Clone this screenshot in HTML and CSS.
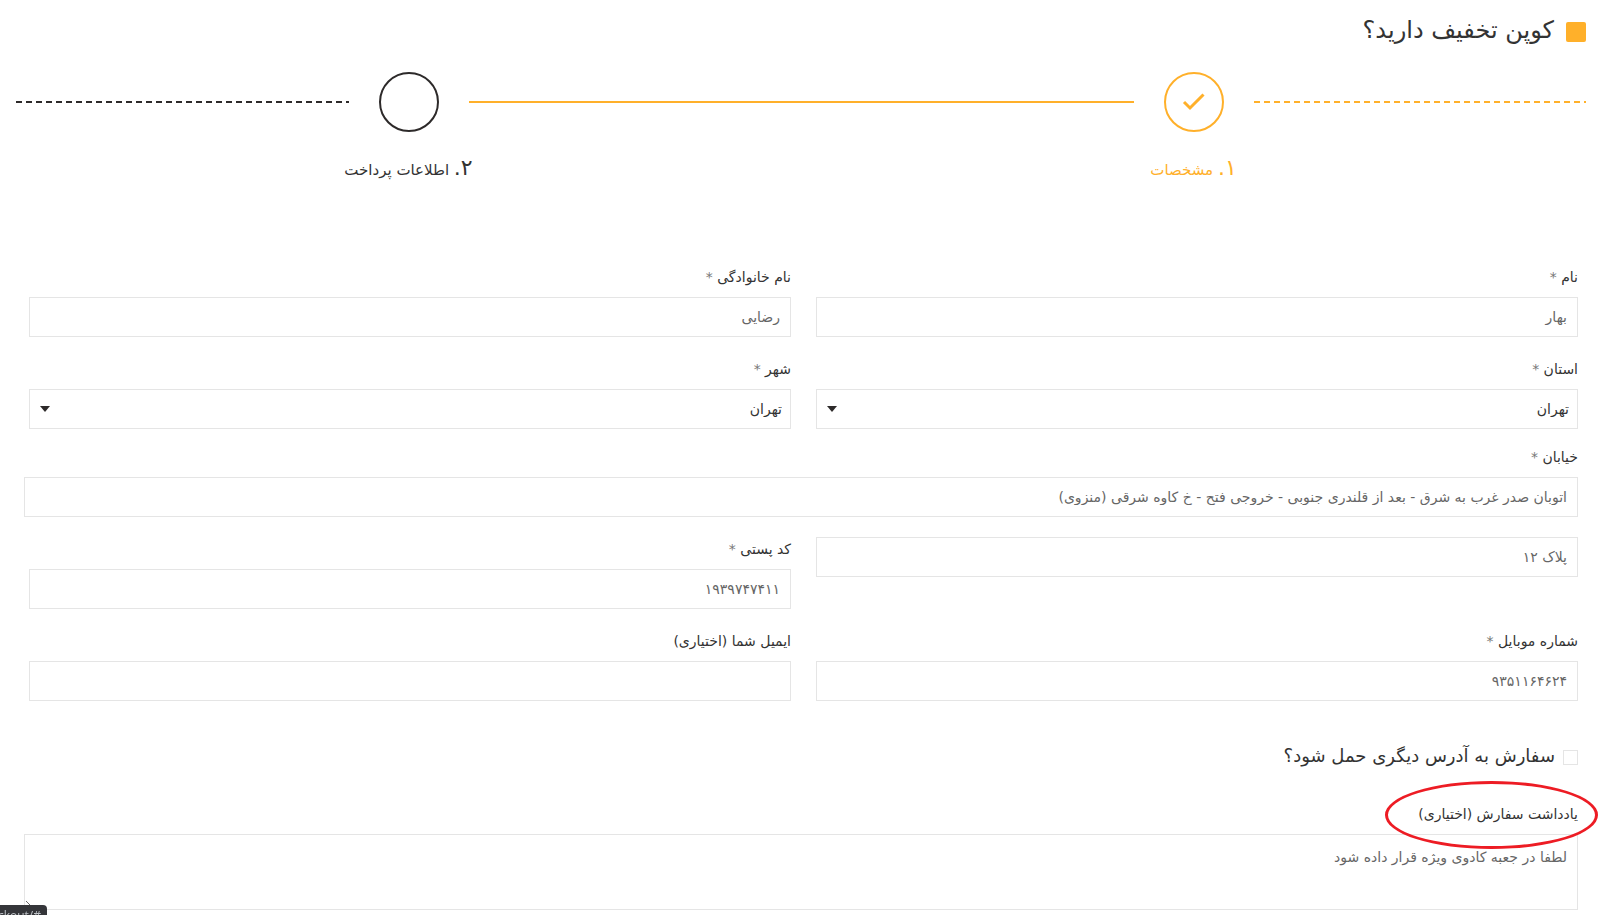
FILE: index.html
```html
<!DOCTYPE html>
<html lang="fa" dir="rtl">
<head>
  <meta charset="UTF-8">
  <meta name="viewport" content="width=device-width, initial-scale=1.0">
  <title>تسویه حساب</title>
  <link rel="stylesheet" href="styles.css">
</head>
<body>
  <main class="checkout">
    <h2 class="coupon"><span class="coupon-mark"></span><span class="coupon-text">کوپن تخفیف دارید؟</span></h2>

    <ol class="steps">
      <li class="step active">
        <div class="step-track">
          <span class="line dashed"></span>
          <span class="circle">
            <svg width="24" height="24" viewBox="0 0 24 24" fill="none" stroke="currentColor" stroke-width="3"><path d="M2 12l6 6L21.500 4.500"/></svg>
          </span>
          <span class="line"></span>
        </div>
        <p class="step-title"><span class="num">۱.</span> مشخصات</p>
      </li>
      <li class="step">
        <div class="step-track">
          <span class="line done"></span>
          <span class="circle"></span>
          <span class="line dashed"></span>
        </div>
        <p class="step-title"><span class="num">۲.</span> اطلاعات پرداخت</p>
      </li>
    </ol>

    <form class="billing">
      <div class="row">
        <div class="field">
          <label for="firstName">نام <span class="required">*</span></label>
          <input type="text" id="firstName" value="بهار">
        </div>
        <div class="field">
          <label for="lastName">نام خانوادگی <span class="required">*</span></label>
          <input type="text" id="lastName" value="رضایی">
        </div>
      </div>

      <div class="row row-tight">
        <div class="field">
          <label for="state">استان <span class="required">*</span></label>
          <div class="select-box">
            <select id="state"><option>تهران</option></select>
          </div>
        </div>
        <div class="field">
          <label for="city">شهر <span class="required">*</span></label>
          <div class="select-box">
            <select id="city"><option>تهران</option></select>
          </div>
        </div>
      </div>

      <div class="field field-wide">
        <label for="street">خیابان <span class="required">*</span></label>
        <input type="text" id="street" value="اتوبان صدر غرب به شرق - بعد از قلندری جنوبی - خروجی فتح - خ کاوه شرقی (منزوی)">
      </div>

      <div class="row">
        <div class="field">
          <input type="text" id="unit" aria-label="پلاک" value="پلاک ۱۲">
        </div>
        <div class="field">
          <label for="postcode">کد پستی <span class="required">*</span></label>
          <input type="text" id="postcode" value="۱۹۳۹۷۴۷۴۱۱">
        </div>
      </div>

      <div class="row">
        <div class="field">
          <label for="phone">شماره موبایل <span class="required">*</span></label>
          <input type="text" id="phone" value="۹۳۵۱۱۶۴۶۲۴">
        </div>
        <div class="field">
          <label for="email">ایمیل شما (اختیاری)</label>
          <input type="text" id="email">
        </div>
      </div>

      <div class="shipping">
        <input type="checkbox" id="otherAddress">
        <label for="otherAddress">سفارش به آدرس دیگری حمل شود؟</label>
      </div>

      <div class="field notes">
        <label for="notes">یادداشت سفارش (اختیاری)</label>
        <textarea id="notes">لطفا در جعبه کادوی ویژه قرار داده شود</textarea>
        <span class="highlight"></span>
      </div>
    </form>
  </main>

  <div class="link-status" dir="ltr">ckout/#</div>
</body>
</html>
```
FILE: styles.css
```css
* { margin: 0; padding: 0; box-sizing: border-box; }
body {
  font-family: 'DejaVu Sans', sans-serif;
  font-size: 14px;
  background: #fff;
  color: #333;
  overflow: hidden;
}
input, select, textarea {
  font-family: inherit;
  font-size: inherit;
}
.checkout {
  padding: 12px 28px 5px 16px;
}
.coupon {
  display: flex;
  align-items: center;
  gap: 12px;
  height: 40px;
  font-size: 24px;
  font-weight: normal;
}
.coupon-text {
  padding-bottom: 4px;
}
.coupon-mark {
  width: 20px;
  height: 20px;
  border-radius: 2px;
  background: #ffb02a;
}

/* steps */
.steps {
  display: flex;
  list-style: none;
  margin-top: 20px;
}
.step {
  flex: 1;
}
.step-track {
  display: flex;
  align-items: center;
  gap: 30px;
}
.line {
  flex: 1;
  border-top: 2px solid #2d2a2a;
}
.line.dashed {
  height: 2px;
  border: 0;
  background: repeating-linear-gradient(to right, #2d2a2a 0 6px, transparent 6px 10px);
}
.line.done,
.active .line {
  border-color: #ffb02a;
}
.active .line.dashed {
  background: repeating-linear-gradient(to right, #ffb02a 0 6px, transparent 6px 10px);
}
.circle {
  display: flex;
  align-items: center;
  justify-content: center;
  width: 60px;
  height: 60px;
  border: 2px solid #2d2a2a;
  border-radius: 50%;
}
.active .circle {
  border-color: #ffb02a;
  color: #ffb02a;
}
.step-title {
  margin-top: 20px;
  height: 32px;
  font-size: 15px;
  line-height: 32px;
  text-align: center;
}
.active .step-title {
  color: #ffb02a;
}
.num {
  font-size: 22px;
}

/* form */
.billing {
  margin-top: 81px;
  padding: 0 8px;
}
.row {
  display: grid;
  grid-template-columns: 1fr 1fr;
  gap: 25px;
  padding-left: 5px;
  margin-bottom: 20px;
}
.row-tight {
  margin-bottom: 16px;
}
.field-wide {
  margin-bottom: 20px;
}
.field label {
  display: block;
  height: 32px;
  line-height: 24px;
}
.required {
  color: #777;
}
.field input,
.field select,
.field textarea {
  display: block;
  width: 100%;
  height: 40px;
  padding: 0 10px;
  border: 1px solid #e5e5e5;
  border-radius: 0;
  background: #fff;
  color: #666;
  outline: none;
}
.select-box {
  position: relative;
}
.field select {
  appearance: none;
  padding: 0 8px;
  color: #333;
}
.select-box::after {
  content: '';
  position: absolute;
  left: 11px;
  top: 17px;
  border: 5px solid transparent;
  border-top: 6px solid #2d2a2a;
  border-bottom: 0;
}
.shipping {
  display: flex;
  align-items: center;
  gap: 8px;
  height: 32px;
  margin-top: 40px;
}
.shipping input {
  appearance: none;
  width: 15px;
  height: 15px;
  border: 1px solid #e5e5e5;
}
.shipping label {
  padding-bottom: 4px;
  font-size: 18px;
}
.notes {
  position: relative;
  margin-top: 29px;
}
.field textarea {
  height: 76px;
  padding: 10px;
  line-height: 24px;
}
.highlight {
  position: absolute;
  top: -21px;
  right: -20px;
  width: 213px;
  height: 68px;
  border: 3px solid #ed1c24;
  border-radius: 50%;
  pointer-events: none;
}
.link-status {
  position: fixed;
  left: 0;
  bottom: -12px;
  width: 47px;
  height: 22px;
  padding-right: 6px;
  border-radius: 0 4px 0 0;
  background: #35363a;
  color: #bdc1c6;
  font-family: 'Open Sans', sans-serif;
  font-size: 12px;
  line-height: 22px;
  display: flex;
  justify-content: flex-end;
  overflow: hidden;
}
```
